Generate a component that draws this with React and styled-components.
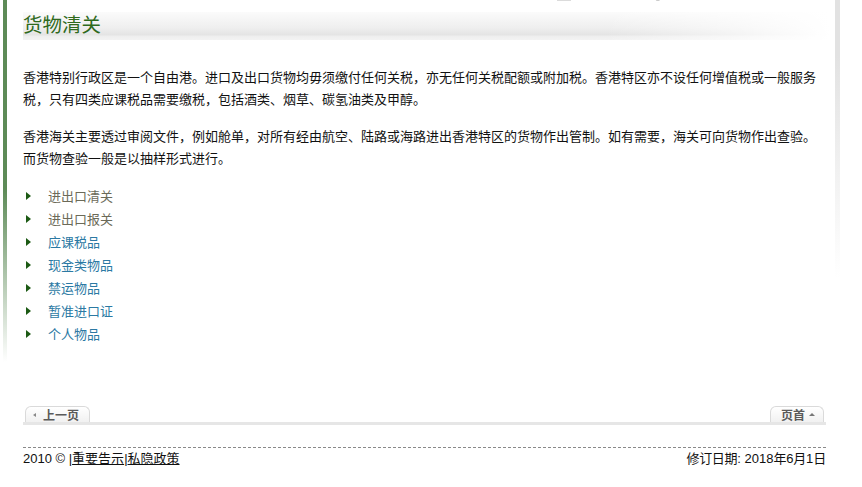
import styled, { createGlobalStyle } from "styled-components";

const GlobalStyle = createGlobalStyle`
  body {
    margin: 0;
    background: #fff;
    font-family: "Liberation Sans", "Noto Sans CJK SC", sans-serif;
    font-size: 13px;
    color: #111;
  }
`;

const Shell = styled.div`
  display: flex;
  align-items: flex-start;
  padding-left: 3px;
  width: 862px;
  height: 487px;
  box-sizing: border-box;
  overflow: hidden;
`;

const SideRule = styled.div`
  flex: none;
  width: ${(p) => p.$w}px;
  height: ${(p) => p.$h}px;
  margin-left: ${(p) => p.$ml || 0}px;
  background: linear-gradient(
    to bottom,
    ${(p) => p.$color} 0,
    ${(p) => p.$color} ${(p) => p.$solid}%,
    rgba(255, 255, 255, 0) 100%
  );
`;

const Main = styled.div`
  flex: none;
  width: 803px;
  margin-left: 16px;
`;

const Toolbar = styled.div`
  height: 4px;
  overflow: hidden;
  position: relative;
`;

const ToolIcon = styled.span`
  display: block;
  position: absolute;
  bottom: 0;
  left: ${(p) => p.$x}px;
`;

const TitleBar = styled.div`
  margin-top: 8px;
  height: 28px;
  margin-right: -4px;
  display: flex;
  align-items: flex-end;
  background: linear-gradient(to right, rgba(255, 255, 255, 0) 72%, #fff 100%),
    linear-gradient(to bottom, #fbfbfb 0, #efefef 55%, #e4e4e4 82%, #eeeeee 86%, #f3f3f3 100%);
`;

const Title = styled.h1`
  margin: 0 0 4px;
  font-family: "Noto Sans CJK SC", sans-serif;
  font-weight: 400;
  font-size: 19.5px;
  line-height: 24px;
  color: #2f6a1d;
`;

const Para = styled.p`
  margin: ${(p) => p.$mt}px 0 0;
  font-family: "Noto Sans CJK SC", sans-serif;
  font-size: 13px;
  line-height: 21.5px;
  color: #111;
`;

const LinkList = styled.ul`
  list-style: none;
  margin: 16px 0 0;
  padding: 0;
`;

const LinkItem = styled.li`
  display: flex;
  align-items: center;
  height: 23px;
  font-family: "Noto Sans CJK SC", sans-serif;
  font-size: 13px;
  color: ${(p) => (p.$visited ? "#6b6a58" : "#2b79a3")};
`;

const Arrow = styled.span`
  width: 0;
  height: 0;
  margin: 0 17px 0 3px;
  border-top: 4px solid transparent;
  border-bottom: 4px solid transparent;
  border-left: 5px solid #1c5a14;
`;

const TabStrip = styled.div`
  margin-top: 61px;
  display: flex;
  justify-content: space-between;
  align-items: flex-end;
  padding: 0 2px;
  border-bottom: 3px solid #e6e6e6;
`;

const Tab = styled.div`
  display: flex;
  align-items: center;
  gap: ${(p) => p.$gap}px;
  height: 15px;
  padding: 0 ${(p) => p.$pr}px 0 ${(p) => p.$pl}px;
  border: 1px solid #dadada;
  border-bottom: none;
  border-radius: 6px 6px 0 0;
  background: linear-gradient(to bottom, #ffffff, #f1f1f1);
  font-family: "Noto Sans CJK SC", sans-serif;
  font-size: 12px;
  font-weight: 700;
  color: #5a5a5a;
`;

const Caret = styled.span`
  width: 0;
  height: 0;
  ${(p) =>
    p.$dir === "left"
      ? `border-top: 2.5px solid transparent;
         border-bottom: 2.5px solid transparent;
         border-right: 3px solid #888;`
      : `border-left: 3px solid transparent;
         border-right: 3px solid transparent;
         border-bottom: 3px solid #777;`}
`;

const Footer = styled.div`
  margin-top: 22px;
  border-top: 1px dashed #8a8a8a;
  padding-top: 1px;
  display: flex;
  justify-content: space-between;
  font-size: 13px;
  line-height: 18px;
  color: #111;
`;

const FootLink = styled.a`
  color: #111;
  text-decoration: underline;
  font-family: "Noto Sans CJK SC", sans-serif;
`;

const Cjk = styled.span`
  font-family: "Noto Sans CJK SC", sans-serif;
  letter-spacing: -0.3px;
`;

const links = [
  { label: "进出口清关", visited: true },
  { label: "进出口报关", visited: true },
  { label: "应课税品" },
  { label: "现金类物品" },
  { label: "禁运物品" },
  { label: "暂准进口证" },
  { label: "个人物品" },
];

const App = () => {
  return (
    <>
      <GlobalStyle />
      <Shell>
        <SideRule $w={4} $h={362} $color="#5d8a57" $solid={52} />
        <Main>
          <Toolbar>
            <ToolIcon $x={534}>
              <svg width="14" height="4" viewBox="0 0 14 4">
                <rect x="0.5" y="-2" width="13" height="5" fill="#fafafa" stroke="#b8b8b8" />
              </svg>
            </ToolIcon>
            <ToolIcon $x={620}>
              <svg width="20" height="4" viewBox="0 0 20 4">
                <path d="M0 0.5 H10" stroke="#b0b0b0" />
                <circle cx="15" cy="0" r="3" fill="none" stroke="#9a9a9a" strokeWidth="1.2" />
              </svg>
            </ToolIcon>
            <ToolIcon $x={720}>
              <svg width="20" height="4" viewBox="0 0 20 4">
                <rect x="0" y="0" width="19" height="2" fill="#8a8a8a" />
              </svg>
            </ToolIcon>
          </Toolbar>
          <TitleBar>
            <Title>货物清关</Title>
          </TitleBar>
          <Para $mt={26}>
            香港特别行政区是一个自由港。进口及出口货物均毋须缴付任何关税，亦无任何关税配额或附加税。香港特区亦不设任何增值税或一般服务税，只有四类应课税品需要缴税，包括酒类、烟草、碳氢油类及甲醇。
          </Para>
          <Para $mt={16}>
            香港海关主要透过审阅文件，例如舱单，对所有经由航空、陆路或海路进出香港特区的货物作出管制。如有需要，海关可向货物作出查验。而货物查验一般是以抽样形式进行。
          </Para>
          <LinkList>
            {links.map((l) => (
              <LinkItem key={l.label} $visited={l.visited}>
                <Arrow />
                {l.label}
              </LinkItem>
            ))}
          </LinkList>
          <TabStrip>
            <Tab $pl={7} $pr={10} $gap={7}>
              <Caret $dir="left" />
              上一页
            </Tab>
            <Tab $pl={10} $pr={8} $gap={4}>
              页首
              <Caret $dir="up" />
            </Tab>
          </TabStrip>
          <Footer>
            <span>
              2010 © |<FootLink href="#">重要告示</FootLink>|<FootLink href="#">私隐政策</FootLink>
            </span>
            <span>
              <Cjk>修订日期</Cjk>: 2018<Cjk>年</Cjk>6<Cjk>月</Cjk>1<Cjk>日</Cjk>
            </span>
          </Footer>
        </Main>
        <SideRule $w={5} $h={278} $ml={9} $color="#e2e2e2" $solid={20} />
      </Shell>
    </>
  );
};

export default App;
